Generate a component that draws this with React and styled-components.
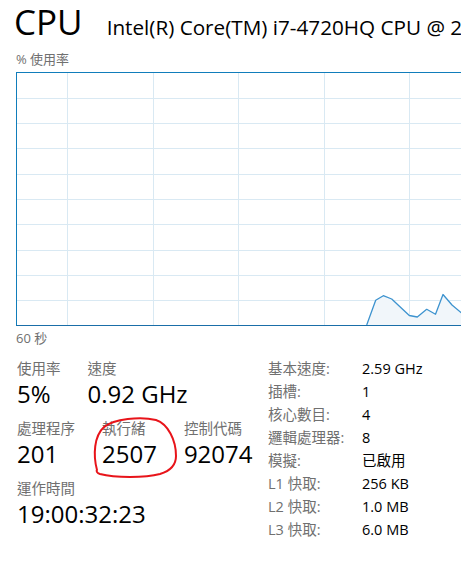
import React from "react";
import styled, { createGlobalStyle } from "styled-components";

const Global = createGlobalStyle`
  html, body { margin: 0; padding: 0; background: #ffffff; }
  body { font-family: "Open Sans", "Noto Sans CJK TC", sans-serif; color: #000; }
`;

const Page = styled.div`
  width: 461px;
  height: 576px;
  overflow: hidden;
  position: relative;
  background: #fff;
`;

const Header = styled.div`
  display: flex;
  align-items: baseline;
  gap: 24px;
  padding-left: 14px;
  height: 44px;
  white-space: nowrap;
`;

const Title = styled.div`
  font-size: 35px;
  line-height: 44px;
  font-weight: 400;
  color: #000;
  flex: none;
`;

const Subtitle = styled.div`
  font-size: 20.7px;
  line-height: 44px;
  color: #000;
  flex: none;
`;

const SmallLabel = styled.div`
  font-size: 13px;
  line-height: 16px;
  color: #707070;
  padding-left: 16px;
  margin-top: ${(p) => p.$top || 0}px;
`;

const ChartWrap = styled.div`
  margin-left: 16px;
  margin-top: 5px;
  width: 520px;
  height: 252px;
  border-left: 1px solid #117dbb;
  border-top: 1px solid #117dbb;
  border-bottom: 1px solid #1a6ea8;
  & > svg { display: block; }
`;

const Stats = styled.div`
  display: grid;
  grid-template-columns: 251px 1fr;
  align-items: start;
  padding-left: 17px;
  margin-top: 13px;
`;

const LeftCol = styled.div`
  display: flex;
  flex-direction: column;
  gap: 10px;
`;

const StatRow = styled.div`
  display: flex;
  gap: 27px;
  white-space: nowrap;
`;

const StatItem = styled.div`
  display: flex;
  flex-direction: column;
`;

const StatLabel = styled.div`
  font-size: 14.5px;
  line-height: 20px;
  color: #707070;
`;

const StatValue = styled.div`
  font-size: 24px;
  line-height: 30px;
  color: #000;
`;

const InfoTable = styled.div`
  display: grid;
  grid-template-columns: 94px 1fr;
  grid-auto-rows: 23px;
  align-items: center;
  white-space: nowrap;
  margin-top: -2px;
`;

const InfoLabel = styled.div`
  font-size: 14.5px;
  line-height: 23px;
  height: 23px;
  color: #707070;
`;

const InfoValue = styled.div`
  font-size: 14.5px;
  line-height: 23px;
  height: 23px;
  color: #000;
`;

const Annotation = styled.svg`
  position: absolute;
  left: 0;
  top: 0;
  pointer-events: none;
`;

const Dot = styled.div`
  position: absolute;
  left: 250px;
  top: 457px;
  width: 2px;
  height: 2px;
  background: #333;
`;

const vLines = [50, 136, 221, 307, 392, 478];
const hLines = [25, 50, 75, 101, 126, 151, 177, 202, 227];
const pts = [
  [349.7, 252], [358.7, 227.3], [366.3, 222.7], [374.7, 226], [392.3, 242.5],
  [400.3, 244], [409.7, 236.3], [418.5, 241.3], [426, 221.5], [435, 232],
  [444, 239.5], [452, 236], [462, 242], [470, 238], [480, 244], [500, 240], [520, 242],
];

function Chart() {
  const line = pts.map((p, i) => `${i ? "L" : "M"}${p[0]} ${p[1]}`).join(" ");
  const area = `${line} L520 252 L349.7 252 Z`;
  return (
    <ChartWrap>
      <svg width="520" height="252" viewBox="0 0 520 252">
        {vLines.map((x) => (
          <line key={"v" + x} x1={x + 0.5} y1="0" x2={x + 0.5} y2="252" stroke="#d9e9f3" strokeWidth="1" />
        ))}
        {hLines.map((y) => (
          <line key={"h" + y} x1="0" y1={y + 0.5} x2="520" y2={y + 0.5} stroke="#d9e9f3" strokeWidth="1" />
        ))}
        <path d={area} fill="#f1f6fa" />
        <path d={line} fill="none" stroke="#3d93cf" strokeWidth="1.3" strokeLinejoin="round" />
      </svg>
    </ChartWrap>
  );
}

const info = [
  ["基本速度:", "2.59 GHz"],
  ["插槽:", "1"],
  ["核心數目:", "4"],
  ["邏輯處理器:", "8"],
  ["模擬:", "已啟用"],
  ["L1 快取:", "256 KB"],
  ["L2 快取:", "1.0 MB"],
  ["L3 快取:", "6.0 MB"],
];

function Stat({ label, value }) {
  return (
    <StatItem>
      <StatLabel>{label}</StatLabel>
      <StatValue>{value}</StatValue>
    </StatItem>
  );
}

export default function App() {
  return (
    <Page>
      <Global />
      <Header>
        <Title>CPU</Title>
        <Subtitle>Intel(R) Core(TM) i7-4720HQ CPU @ 2.60GHz</Subtitle>
      </Header>
      <SmallLabel $top={7}>% 使用率</SmallLabel>
      <Chart />
      <SmallLabel $top={4}>60 秒</SmallLabel>
      <Stats>
        <LeftCol>
          <StatRow>
            <Stat label="使用率" value="5%" />
            <Stat label="速度" value="0.92 GHz" />
          </StatRow>
          <StatRow>
            <Stat label="處理程序" value="201" />
            <Stat label="執行緒" value="2507" />
            <Stat label="控制代碼" value="92074" />
          </StatRow>
          <StatRow>
            <Stat label="運作時間" value="19:00:32:23" />
          </StatRow>
        </LeftCol>
        <InfoTable>
          {info.map(([l, v]) => (
            <React.Fragment key={l}>
              <InfoLabel>{l}</InfoLabel>
              <InfoValue>{v}</InfoValue>
            </React.Fragment>
          ))}
        </InfoTable>
      </Stats>
      <Dot />
      <Annotation width="461" height="576" viewBox="0 0 461 576">
        <path
          d="M97 470 C93 455, 94 436, 104 427 C114 419, 140 416, 156 420 C168 424, 176 440, 176 456 C176 466, 170 471, 160 474 C145 478, 115 478, 100 474 C97 473, 96 471, 97 470"
          fill="none"
          stroke="#e8141a"
          strokeWidth="2"
          strokeLinecap="round"
        />
      </Annotation>
    </Page>
  );
}
